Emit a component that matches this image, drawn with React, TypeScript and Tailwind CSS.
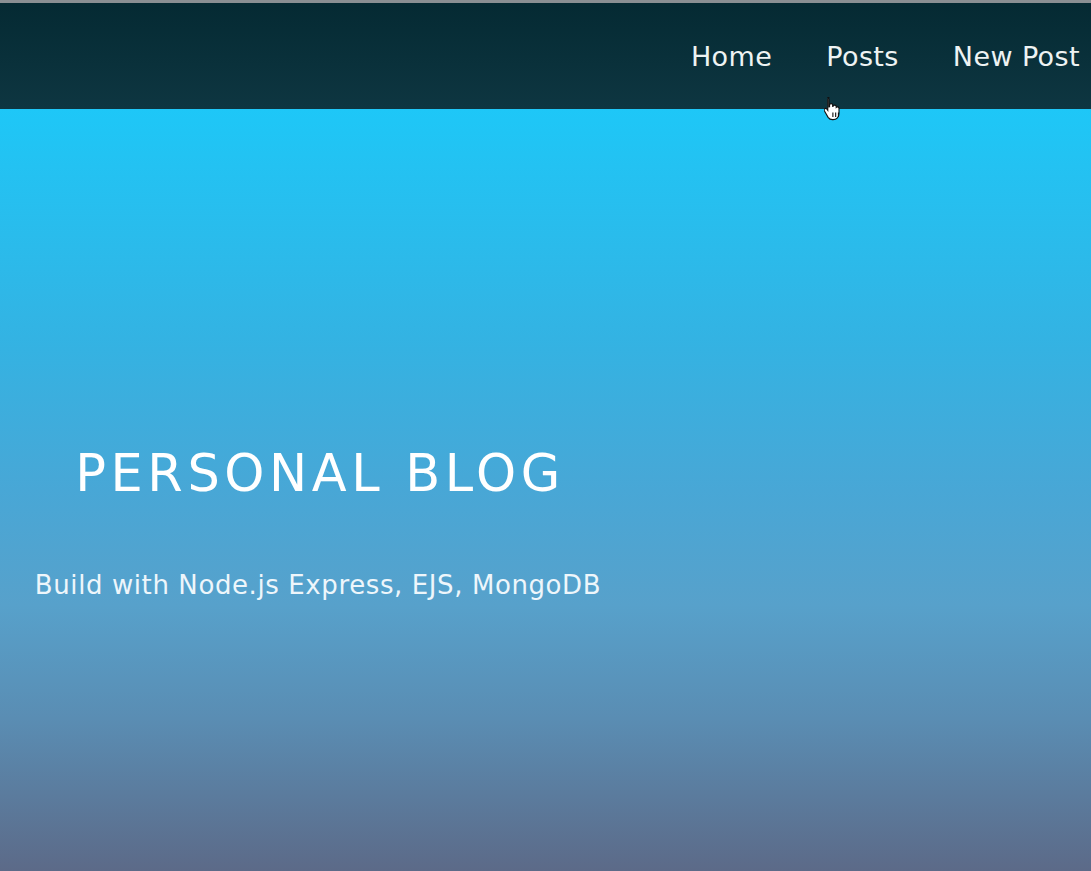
import React from "react";

export default function App() {
  return (
    <div className="w-[1091px] h-[871px] overflow-hidden flex flex-col" style={{ fontFamily: '"DejaVu Sans", "Noto Sans", sans-serif' }}>
      <div className="h-[3px] bg-[#8a8f93]" />
      <header className="relative z-10 h-[106px] bg-gradient-to-b from-[#052a33] to-[#0e3641] flex items-center justify-end pr-[11px]">
        <nav className="flex items-center gap-[54px] text-[27px] tracking-[0.4px] text-[#eef3f3] pt-[3px]">
          <a>Home</a>
          <a>Posts</a>
          <a>New Post</a>
        </nav>
        <svg className="absolute left-[824px] top-[92px] z-20" width="20" height="26" viewBox="0 0 18 22">
          <path d="M4 1.5c.9 0 1.5.6 1.5 1.5v7l.5-.1V8.5c0-.8.6-1.4 1.4-1.4s1.4.6 1.4 1.4v1l.4-.1c.2-.6.8-1 1.4-1 .8 0 1.4.6 1.4 1.4v.6c.3-.3.7-.4 1.1-.4.8 0 1.4.6 1.4 1.4v4.5c0 3-2 5.6-5.3 5.6H8.6c-1.7 0-3-.8-3.9-2.1L1.3 13.5c-.4-.7-.2-1.5.4-1.9.6-.4 1.4-.3 1.8.3l.9 1.2V3c0-.9.6-1.5 1.5-1.5z" fill="#fff" stroke="#111" strokeWidth="1" transform="translate(-1 0)" />
          <path d="M8 15v4M10.5 15v4M13 15v4" stroke="#111" strokeWidth="1" />
        </svg>
      </header>
      <main className="flex-1 bg-[linear-gradient(180deg,#1ec7f7_0%,#33b3e3_30%,#48a7d6_50%,#57a1cb_65%,#5a8db3_80%,#5c6a88_100%)]">
        <div className="w-[636px] flex flex-col items-center text-white">
          <h1 className="mt-[339px] pl-[4px] text-[51px] leading-none tracking-[4.6px]">PERSONAL BLOG</h1>
          <p className="mt-[73px] text-[26px] leading-none tracking-[0.6px] text-[#eef6fb]">Build with Node.js Express, EJS, MongoDB</p>
        </div>
      </main>
    </div>
  );
}
